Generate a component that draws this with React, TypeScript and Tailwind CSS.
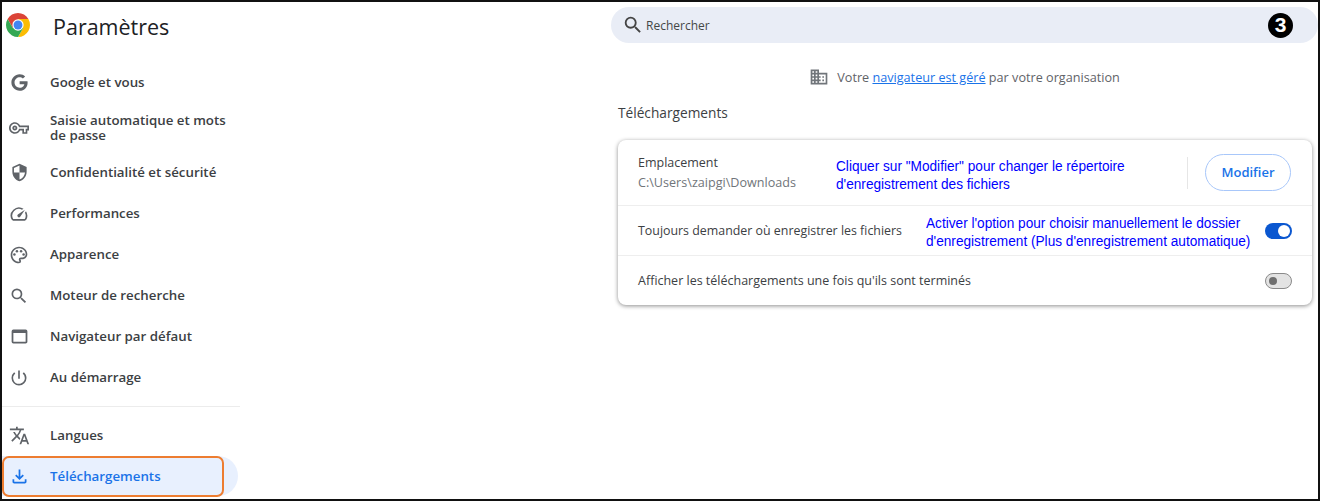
import { FaGoogle } from "react-icons/fa";
import {
  MdDomain,
  MdOutlineFileDownload,
  MdOutlinePalette,
  MdOutlinePowerSettingsNew,
  MdOutlineSpeed,
  MdOutlineVpnKey,
  MdOutlineWebAsset,
  MdSearch,
  MdSecurity,
  MdTranslate,
} from "react-icons/md";

const mainItems = [
  { label: "Google et vous", icon: <FaGoogle size={17} />, h: "h-[41px]" },
  { label: "Saisie automatique et mots de passe", icon: <MdOutlineVpnKey size={20} />, h: "h-[49px]" },
  { label: "Confidentialité et sécurité", icon: <MdSecurity size={19} />, h: "h-[41px]" },
  { label: "Performances", icon: <MdOutlineSpeed size={20} />, h: "h-[41px]" },
  { label: "Apparence", icon: <MdOutlinePalette size={20} />, h: "h-[41px]" },
  { label: "Moteur de recherche", icon: <MdSearch size={20} />, h: "h-[41px]" },
  { label: "Navigateur par défaut", icon: <MdOutlineWebAsset size={21} />, h: "h-[41px]" },
  { label: "Au démarrage", icon: <MdOutlinePowerSettingsNew size={20} />, h: "h-[41px]" },
];

function ChromeLogo() {
  const sector = "M41.32 14A20 20 0 0 0 6.68 14L15.34 29L24 24L24 14Z";
  return (
    <svg viewBox="4 4 40 40" className="w-[24px] h-[24px] -mt-[5px]">
      <path d={sector} fill="#db4437" />
      <path d={sector} fill="#fbbc04" transform="rotate(120 24 24)" />
      <path d={sector} fill="#34a853" transform="rotate(240 24 24)" />
      <circle cx="24" cy="24" r="9.4" fill="#fff" />
      <circle cx="24" cy="24" r="7.4" fill="#4285f4" />
    </svg>
  );
}

function NavRow({ label, icon, h }: { label: string; icon: React.ReactNode; h: string }) {
  return (
    <div className={`flex items-center ${h} pr-2 text-[#3c4043]`}>
      <div className="w-[34px] shrink-0 flex justify-center text-[#5f6368] mr-[14px]">{icon}</div>
      <span className="text-[13.3px] font-semibold leading-[15px]">{label}</span>
    </div>
  );
}

function BlueNote({ lines, className }: { lines: string[]; className: string }) {
  return (
    <div className={`shrink-0 ${className}`}>
      <div className="origin-left scale-x-[0.88] whitespace-nowrap text-[15.5px] leading-[18px] text-[#0000ff] font-['Liberation_Sans',sans-serif]">
        {lines.map((l) => (
          <div key={l}>{l}</div>
        ))}
      </div>
    </div>
  );
}

export default function App() {
  return (
    <div className="relative w-[1320px] h-[501px] flex bg-white border-2 border-[#111] overflow-hidden font-['Open_Sans',sans-serif]">
      {/* Sidebar */}
      <aside className="w-[236px] shrink-0 flex flex-col">
        <div className="flex items-center h-[50px] pl-[4px]">
          <ChromeLogo />
          <h1 className="ml-[23px] text-[21.5px] font-medium text-[#202124]">Paramètres</h1>
        </div>
        <nav className="mt-[10px] flex flex-col">
          {mainItems.map((it) => (
            <NavRow key={it.label} {...it} />
          ))}
        </nav>
        <div className="mt-[8px] h-px bg-[#ececec] mr-[-2px]" />
        <div className="mt-[8px]">
          <NavRow label="Langues" icon={<MdTranslate size={21} />} h="h-[41px]" />
        </div>
        <div className="relative h-[40px] flex items-center rounded-r-full bg-[#e8f0fe] text-[#1a73e8]">
          <div className="w-[34px] shrink-0 flex justify-center mr-[14px]">
            <MdOutlineFileDownload size={21} />
          </div>
          <span className="mt-[1px] text-[13.3px] font-semibold">Téléchargements</span>
          <div className="absolute left-0 top-[0px] w-[222px] h-[41px] rounded-[7px] border-2 border-[#ed7d31]" />
        </div>
      </aside>

      {/* Main */}
      <main className="flex-1 min-w-0 pl-[373px] pt-[5px]">
        <div className="h-[36px] rounded-full bg-[#e9edf6] flex items-center pl-[11px] pr-[25px] text-[#444746]">
          <MdSearch size={22} className="text-[#444]" />
          <span className="ml-[2px] mt-[2px] text-[12px] font-medium">Rechercher</span>
          <div className="ml-auto w-[25px] h-[25px] rounded-full bg-black text-white flex items-center justify-center text-[21px] font-bold font-['Liberation_Sans',sans-serif]">
            3
          </div>
        </div>

        <div className="mt-[22px] h-[24px] flex items-center justify-center text-[12.65px] text-[#5f6368]">
          <MdDomain size={20} className="mr-[8px] text-[#70757a]" />
          <span>
            Votre <span className="text-[#1a73e8] underline">navigateur est géré</span> par votre organisation
          </span>
        </div>

        <h2 className="mt-[14px] ml-[7px] text-[13.7px] font-medium text-[#3c4043] leading-[20px]">Téléchargements</h2>

        <section className="mt-[17px] ml-[7px] mr-[6px] rounded-[8px] bg-white shadow-[0_1px_4px_rgba(0,0,0,0.45)] text-[#3c4043] text-[12.5px]">
          <div className="h-[65px] flex items-center pl-[20px] pr-[21px]">
            <div className="w-[198px] shrink-0">
              <div className="leading-[20px]">Emplacement</div>
              <div className="leading-[20px] text-[12.6px] text-[#70757a]">C:\Users\zaipgi\Downloads</div>
            </div>
            <BlueNote
              className="w-[290px] mt-[5px]"
              lines={['Cliquer sur "Modifier" pour changer le répertoire', "d'enregistrement des fichiers"]}
            />
            <div className="ml-auto h-[32px] w-px bg-[#e6e6e6]" />
            <button className="ml-[17px] w-[86px] h-[37px] rounded-full border-[1.5px] border-[#a8c7fa] text-[#1a73e8] text-[13px] font-semibold">
              Modifier
            </button>
          </div>
          <div className="h-[50px] flex items-center pl-[20px] pr-[20px] border-t border-[#eeeeee]">
            <div className="w-[288px] shrink-0 mt-[1px] text-[12.4px]">Toujours demander où enregistrer les fichiers</div>
            <BlueNote
              className="w-[324px] mt-[2px]"
              lines={[
                "Activer l'option pour choisir manuellement le dossier",
                "d'enregistrement (Plus d'enregistrement automatique)",
              ]}
            />
            <div className="ml-auto w-[27px] h-[16px] rounded-full bg-[#0b57d0] flex items-center justify-end pr-[2px]">
              <div className="w-[12px] h-[12px] rounded-full bg-white" />
            </div>
          </div>
          <div className="h-[50px] flex items-center pl-[20px] pr-[20px] border-t border-[#eeeeee]">
            <div className="mt-[2px]">Afficher les téléchargements une fois qu'ils sont terminés</div>
            <div className="ml-auto w-[27px] h-[16px] rounded-full bg-[#e3e3e3] border border-[#8a8a8a] flex items-center pl-[3px]">
              <div className="w-[8px] h-[8px] rounded-full bg-[#6f6f6f]" />
            </div>
          </div>
        </section>
      </main>
    </div>
  );
}
